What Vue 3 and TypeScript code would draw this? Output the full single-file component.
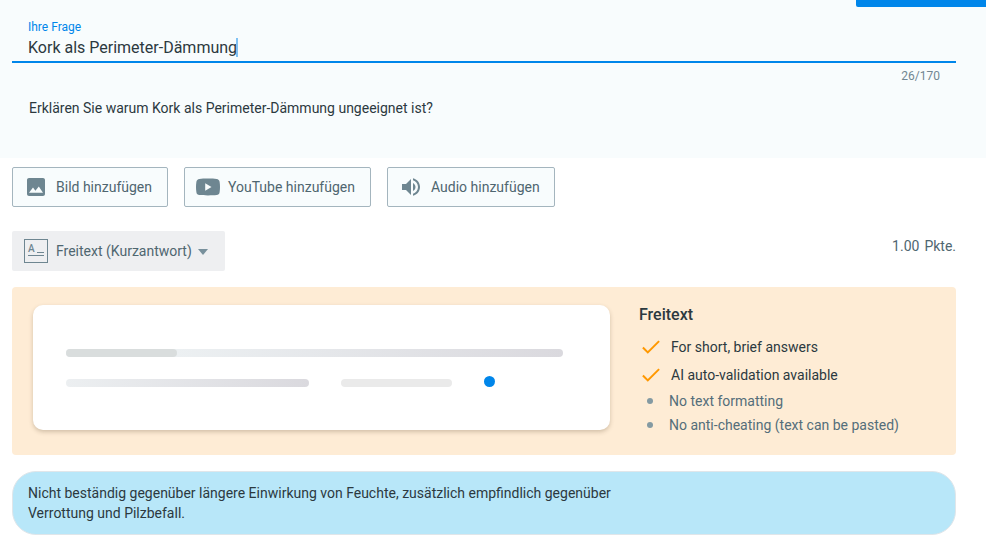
<script setup lang="ts">
import { ref } from 'vue'

interface MediaButton {
  kind: 'image' | 'video' | 'audio'
  label: string
}

const title = ref<string>('Kork als Perimeter-Dämmung')
const maxLength = 170

const mediaButtons: MediaButton[] = [
  { kind: 'image', label: 'Bild hinzufügen' },
  { kind: 'video', label: 'YouTube hinzufügen' },
  { kind: 'audio', label: 'Audio hinzufügen' },
]

const pros: string[] = ['For short, brief answers', 'AI auto-validation available']
const cons: string[] = ['No text formatting', 'No anti-cheating (text can be pasted)']
</script>

<template>
  <main class="editor">
    <section class="question">
      <div class="tab"></div>
      <div class="field">
        <span class="field-label">Ihre Frage</span>
        <div class="field-value"><span>{{ title }}</span><i class="caret"></i></div>
      </div>
      <div class="counter">{{ title.length }}/{{ maxLength }}</div>
      <p class="description">Erklären Sie warum Kork als Perimeter-Dämmung ungeeignet ist?</p>
    </section>

    <div class="media">
      <button v-for="b in mediaButtons" :key="b.kind" class="media-btn" :class="b.kind">
        <svg v-if="b.kind === 'image'" width="24" height="24" viewBox="0 0 24 24">
          <path d="M21 19V5c0-1.100-.9-2-2-2H5c-1.100 0-2 .9-2 2v14c0 1.100.9 2 2 2h14c1.100 0 2-.9 2-2zM9 12.500l2.400 3.200 3.400-4.200 4.200 6.300H5z" />
        </svg>
        <svg v-else-if="b.kind === 'video'" width="24" height="24" viewBox="0 0 24 24">
          <path fill-rule="evenodd" d="M12 3.600c3.500 0 6.500.1 8.600.3 1.700.2 2.800 1.200 3 2.900.3 2 .4 3.500.4 5.200s-.1 3.200-.4 5.200c-.2 1.700-1.300 2.700-3 2.900-2.100.2-5.100.3-8.600.3s-6.500-.1-8.600-.3c-1.700-.2-2.800-1.200-3-2.900C.1 15.200 0 13.700 0 12s.1-3.200.4-5.200c.2-1.700 1.300-2.700 3-2.900 2.100-.2 5.100-.3 8.600-.3zM9.200 8.300v7.400l6.300-3.700z" />
        </svg>
        <svg v-else width="24" height="24" viewBox="0 0 24 24">
          <path d="M3 9v6h4l5 5V4L7 9H3zm13.500 3c0-1.770-1.020-3.290-2.500-4.030v8.050c1.480-.73 2.500-2.250 2.500-4.020zM14 3.230v2.060c2.890.86 5 3.540 5 6.710s-2.110 5.850-5 6.710v2.060c4.010-.91 7-4.490 7-8.770s-2.990-7.860-7-8.770z" />
        </svg>
        <span>{{ b.label }}</span>
      </button>
    </div>

    <div class="type-row">
      <button class="type-select">
        <span class="type-icon">
          <span class="type-top"><b>A</b><i></i></span>
          <i class="type-line"></i>
        </span>
        <span>Freitext (Kurzantwort)</span>
        <svg class="arrow" width="10" height="6" viewBox="0 0 10 6"><path d="M0 0h10L5 6z" /></svg>
      </button>
      <div class="points"><span>1.00</span><span>Pkte.</span></div>
    </div>

    <section class="info">
      <div class="preview">
        <div class="bar full"><i></i></div>
        <div class="preview-row">
          <div class="bar medium"></div>
          <div class="bar short"></div>
          <div class="dot"></div>
        </div>
      </div>
      <div class="details">
        <h2>Freitext</h2>
        <ul>
          <li v-for="p in pros" :key="p" class="pro">
            <svg width="18" height="14" viewBox="0 0 18 14"><path d="M.9 7.500l4.900 4.900L17.100 1.100" /></svg>
            <span>{{ p }}</span>
          </li>
          <li v-for="c in cons" :key="c" class="con"><i></i><span>{{ c }}</span></li>
        </ul>
      </div>
    </section>

    <section class="answer">
      <p>Nicht beständig gegenüber längere Einwirkung von Feuchte, zusätzlich empfindlich gegenüber Verrottung und Pilzbefall.</p>
    </section>
  </main>
</template>

<style>
body {
  background: #fff;
}
</style>

<style scoped>
* {
  box-sizing: border-box;
}
.editor {
  height: 560px;
  overflow: hidden;
  font-family: Roboto, "Liberation Sans", sans-serif;
  font-size: 14px;
  color: #2c393f;
}
p, h2, ul {
  margin: 0;
  padding: 0;
}
button {
  font: inherit;
  cursor: pointer;
}
.question {
  height: 158px;
  background: #f8fcfd;
}
.tab {
  width: 130px;
  height: 7px;
  margin-left: auto;
  background: #0086ea;
  border-bottom-left-radius: 2px;
}
.field {
  height: 56px;
  margin: 0 30px 0 12px;
  padding: 12px 16px 0;
  border-bottom: 2px solid #0086ea;
}
.field-label {
  display: block;
  font-size: 12px;
  line-height: 16px;
  color: #0086ea;
}
.field-value {
  display: flex;
  align-items: center;
  height: 26px;
  font-size: 16px;
  line-height: 24px;
}
.caret {
  width: 2px;
  height: 19px;
  margin: 0 0 1px -1px;
  background: #80c2f4;
}
.counter {
  padding: 5px 46px 0 0;
  text-align: right;
  font-size: 12px;
  line-height: 16px;
  color: #718792;
}
.description {
  padding: 14px 0 0 29px;
  line-height: 20px;
}
.media {
  display: flex;
  gap: 16px;
  padding: 9px 12px 0;
}
.media-btn {
  display: flex;
  align-items: center;
  height: 40px;
  padding: 0 0 0 11px;
  gap: 8px;
  background: #f8fcfd;
  border: 1px solid #a4b5be;
  border-radius: 2px;
  color: #4f6670;
  white-space: nowrap;
}
.media-btn svg {
  flex: none;
  fill: #6e8691;
}
.image {
  width: 156px;
}
.video {
  width: 187px;
}
.audio {
  width: 168px;
}
.type-row {
  display: flex;
  justify-content: space-between;
  padding: 24px 30px 0 12px;
}
.type-select {
  display: flex;
  align-items: center;
  width: 213px;
  height: 40px;
  padding: 0 0 0 12px;
  gap: 8px;
  border: 0;
  border-radius: 2px;
  background: #eeeff1;
  color: #4f6670;
  white-space: nowrap;
}
.type-icon {
  display: flex;
  flex-direction: column;
  flex: none;
  width: 24px;
  height: 24px;
  padding: 5px 3px 0;
  border: 1px solid #6e8691;
}
.type-top {
  display: flex;
  justify-content: space-between;
  align-items: flex-end;
  height: 9px;
}
.type-top b {
  font-size: 10px;
  font-weight: 500;
  line-height: 10px;
  color: #6e8691;
}
.type-top i {
  width: 7px;
  height: 1px;
  margin-bottom: 1px;
  background: #6e8691;
}
.type-line {
  height: 1px;
  margin-top: 1px;
  background: #6e8691;
}
.arrow {
  margin: 1px 0 0 -2px;
  fill: #78909c;
}
.points {
  display: flex;
  gap: 5px;
  padding-top: 5px;
  line-height: 20px;
  color: #4f6670;
}
.info {
  display: flex;
  height: 168px;
  margin: 16px 30px 0 12px;
  padding: 18px 21px;
  background: #feecd5;
  border-radius: 4px;
}
.preview {
  flex: none;
  width: 577px;
  height: 125px;
  padding: 44px 33px 0;
  background: #fff;
  border-radius: 10px;
  box-shadow: 0 2px 4px rgba(80, 60, 30, 0.25);
}
.bar {
  height: 8px;
  border-radius: 4px;
}
.full {
  width: 496.500px;
  background: linear-gradient(90deg, #eceff1 0%, #ecf0f2 22%, #dad9de 100%);
}
.full i {
  display: block;
  width: 110.500px;
  height: 8px;
  border-radius: 4px;
  background: #d9dddd;
}
.preview-row {
  display: flex;
  align-items: center;
  margin-top: 19px;
}
.medium {
  width: 243px;
  margin-top: 2px;
  background: linear-gradient(90deg, #eceff1, #dad9de);
}
.short {
  width: 111px;
  margin: 2px 32px 0;
  background: #eaeaea;
}
.dot {
  width: 11px;
  height: 11px;
  border-radius: 50%;
  background: #0086ea;
}
.details {
  padding-left: 29px;
}
h2 {
  font-size: 16px;
  font-weight: 500;
  line-height: 20px;
}
ul {
  padding-top: 8px;
  list-style: none;
}
li {
  display: flex;
  align-items: center;
  height: 24px;
}
.pro {
  height: 28px;
  padding-left: 3px;
  gap: 11px;
}
.pro path {
  fill: none;
  stroke: #ff9800;
  stroke-width: 2;
}
.con {
  padding-left: 8px;
  gap: 16px;
  color: #546e7a;
}
.con i {
  width: 6px;
  height: 6px;
  border-radius: 50%;
  background: #849aa2;
}
.answer {
  height: 64px;
  margin: 16px 30px 0 12px;
  padding: 11px 15px;
  background: #b8e7f9;
  border: 1px solid #e0e6ea;
  border-radius: 24px;
  line-height: 20px;
}
.answer p {
  width: 600px;
}
</style>
